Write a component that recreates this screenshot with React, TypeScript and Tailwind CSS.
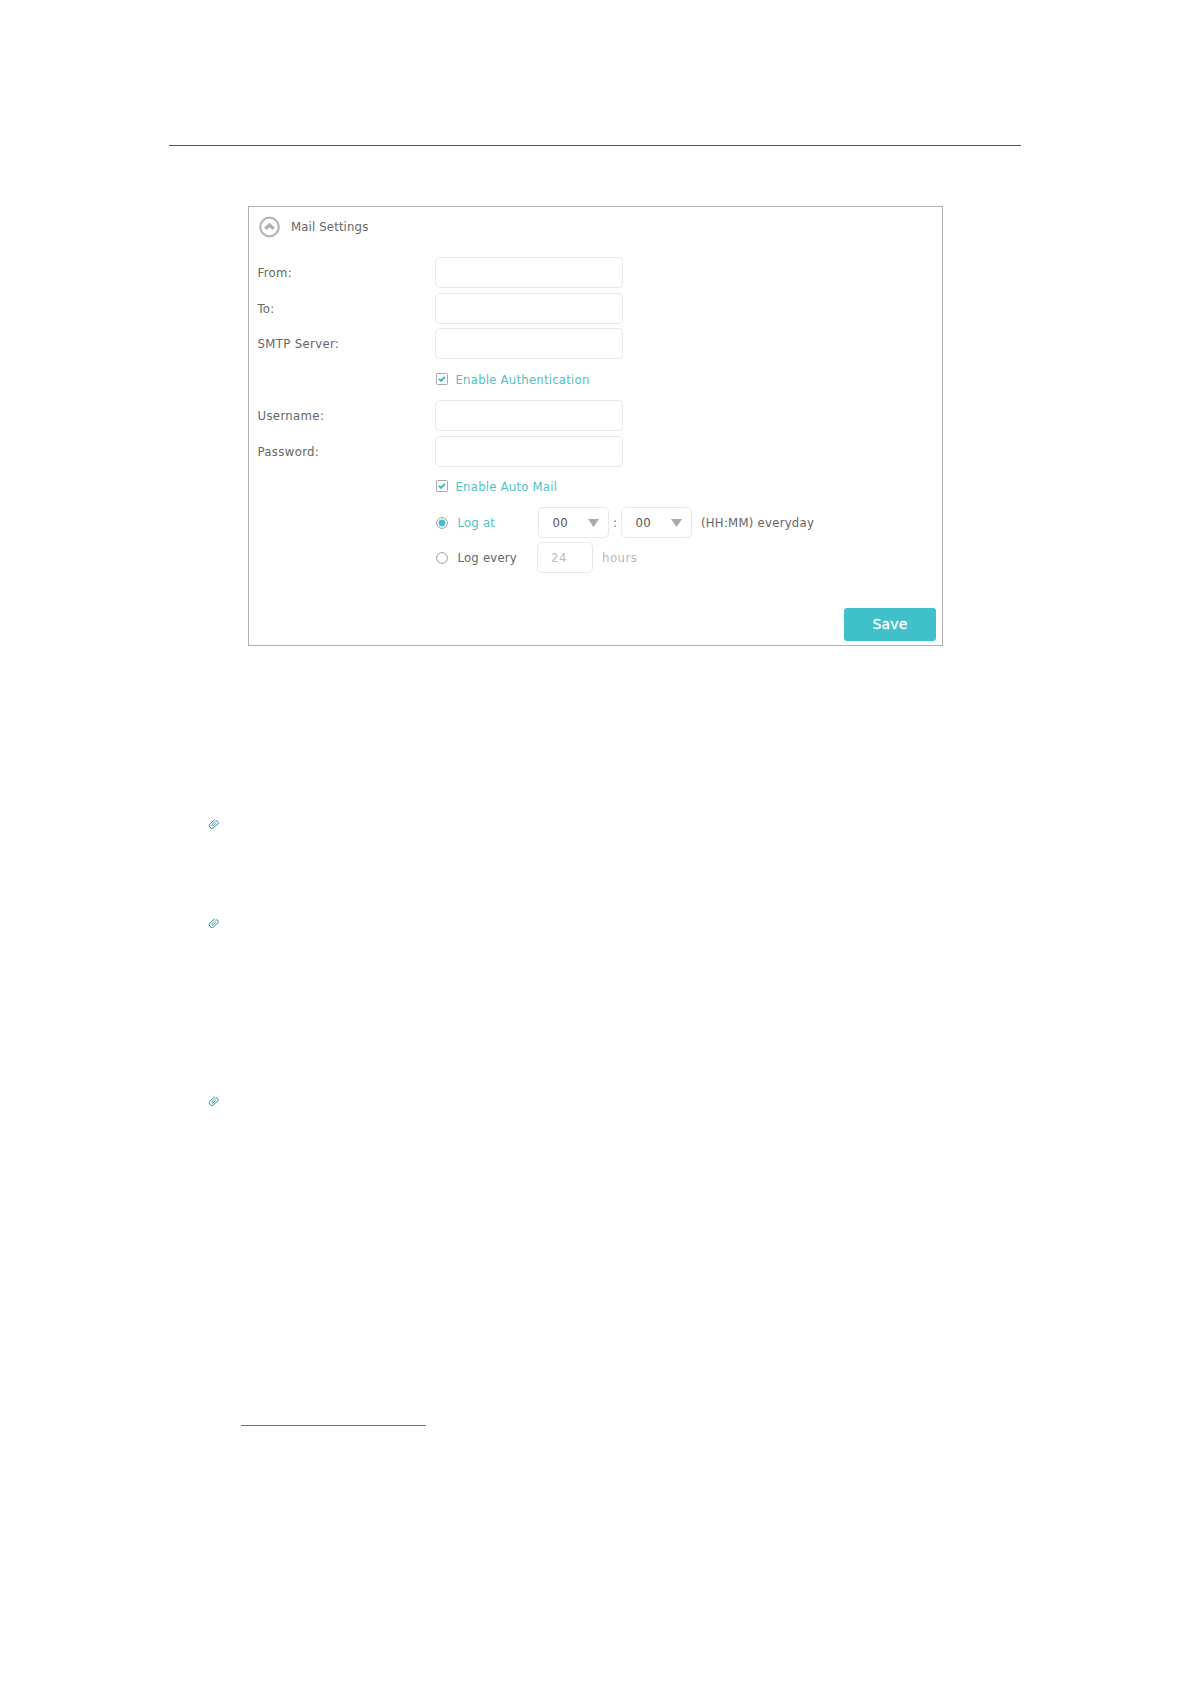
import type { ReactNode } from 'react'

const ROW = 'flex h-[35.75px] items-center'
const FIELD = 'rounded-[5px] border border-[#e8e8e8] bg-white outline-none'

export default function App() {
  return (
    <main className="h-[1684px] w-[1190px] overflow-hidden bg-white pt-[145px] font-['DejaVu_Sans_Condensed','DejaVu_Sans','Noto_Sans',sans-serif] text-[13px] leading-none text-[#666]">
      <div className="ml-[169px] h-px w-[852px] bg-[#555]" />
      <MailSettings />

      <div className="ml-[208px] flex flex-col">
        <Clip className="mt-[172px]" />
        <Clip className="mt-[87px]" />
        <Clip className="mt-[166px]" />
      </div>
      <div className="mt-[318px] ml-[241px] h-px w-[185px] bg-[#42808a]" />
    </main>
  )
}

function MailSettings() {
  return (
    <section className="mt-[60px] ml-[248px] flex h-[440px] w-[695px] flex-col border border-[#b0b0b0]">
      <header className="flex h-[47.6px] items-start pt-[8.5px] pl-[9px]">
        <svg width="23" height="22" viewBox="0 0 23 22" className="shrink-0">
          <circle cx="11.5" cy="11" r="9.3" fill="none" stroke="#b5b5b5" strokeWidth="2.2" />
          <path d="M7.3 12.8 11.5 9l4.2 3.8" fill="none" stroke="#b0b0b0" strokeWidth="3.4" />
        </svg>
        <h1 className="mt-[4.5px] ml-[10px] tracking-[0.15px]">Mail Settings</h1>
      </header>

      <TextRow label="From:" />
      <TextRow label="To:" />
      <TextRow label="SMTP Server:" />
      <CheckRow>Enable Authentication</CheckRow>
      <TextRow label="Username:" />
      <TextRow label="Password:" />
      <CheckRow>Enable Auto Mail</CheckRow>

      <div className={`${ROW} pl-[187px]`}>
        <Radio checked />
        <span className="ml-[9.5px] w-[80.5px] tracking-[0.2px] text-[#52bfc5]">Log at</span>
        <TimeSelect value="00" />
        <span className="w-[12px] text-center">:</span>
        <TimeSelect value="00" />
        <span className="ml-[9px] whitespace-nowrap tracking-[0.25px]">(HH:MM) everyday</span>
      </div>
      <div className={`${ROW} pb-px pl-[187px]`}>
        <Radio />
        <span className="ml-[9.5px] w-[79.5px] tracking-[0.2px]">Log every</span>
        <div className={`${FIELD} flex h-[31px] w-[56px] items-center pl-[13px] tracking-[0.6px] text-[#bcbcbc]`}>24</div>
        <span className="ml-[9px] tracking-[0.5px] text-[#b8b8b8]">hours</span>
      </div>

      <button className="mt-auto mr-[6px] mb-[4px] h-[33px] w-[92px] self-end rounded-[3px] bg-[#40c1c9] pb-px font-['DejaVu_Sans','Noto_Sans',sans-serif] text-[14px] tracking-[0.2px] text-white [-webkit-text-stroke:0.3px_white]">
        Save
      </button>
    </section>
  )
}

function TextRow({ label }: { label: string }) {
  return (
    <label className={`${ROW} pl-[8.5px]`}>
      <span className="w-[177.5px] tracking-[0.35px]">{label}</span>
      <input className={`${FIELD} h-[31px] w-[188px]`} />
    </label>
  )
}

function CheckRow({ children }: { children: ReactNode }) {
  return (
    <div className={`${ROW} pb-px pl-[187px]`}>
      <svg width="12" height="12" viewBox="0 0 12 12">
        <rect x=".5" y=".5" width="11" height="11" rx="1" fill="#fff" stroke="#a8a8a8" />
        <path d="m3 5.7 2.1 2.1L9 4" fill="none" stroke="#3fbdc5" strokeWidth="2" />
      </svg>
      <span className="ml-[7.5px] whitespace-nowrap tracking-[0.22px] text-[#52bfc5]">{children}</span>
    </div>
  )
}

function Radio({ checked = false }: { checked?: boolean }) {
  return (
    <svg width="12" height="12" viewBox="0 0 12 12">
      <circle cx="6" cy="6" r="5.4" fill="#fff" stroke="#a0a0a0" />
      {checked && <circle cx="6" cy="6" r="3.4" fill="#40c1c9" />}
    </svg>
  )
}

function TimeSelect({ value }: { value: string }) {
  return (
    <div className={`${FIELD} flex h-[31px] w-[71px] items-center justify-between pr-[9px] pl-[13.5px] tracking-[0.4px] text-[#555]`}>
      {value}
      <svg width="11" height="8" viewBox="0 0 11 8">
        <path d="M0 0h11L5.5 8z" fill="#aaa" />
      </svg>
    </div>
  )
}

function Clip({ className }: { className: string }) {
  return (
    <svg width="12" height="12" viewBox="0 0 12 12" className={className}>
      <g transform="rotate(-42 6 6)" fill="none" stroke="#2f8a90" strokeWidth=".9">
        <path d="M9.4 3.3H3.2a2.6 2.6 0 0 0 0 5.2h6a1.8 1.8 0 0 0 0-3.5" />
        <path d="M9 5H4.2a.9.9 0 0 0 0 1.8h4" strokeWidth=".7" />
      </g>
    </svg>
  )
}
